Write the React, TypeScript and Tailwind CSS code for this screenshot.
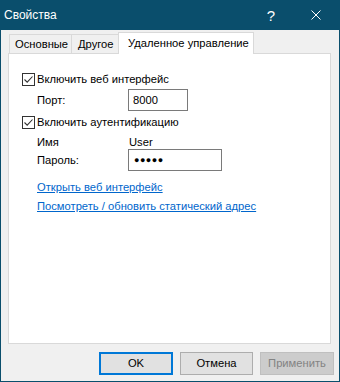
import React from "react";

function CheckBox() {
  return (
    <div className="w-[13px] h-[13px] border border-[#333333] bg-white flex items-center justify-center shrink-0">
      <svg width="11" height="11" viewBox="0 0 11 11">
        <path d="M1.5 5.5 L4.2 8.2 L9.5 2.5" fill="none" stroke="#333333" strokeWidth="1.1" />
      </svg>
    </div>
  );
}

export default function App() {
  return (
    <div className="w-[340px] h-[382px] bg-[#0a4e6c] flex flex-col font-['Liberation_Sans',sans-serif] text-[11.2px] text-black select-none whitespace-nowrap">
      {/* title bar */}
      <div className="h-[30px] flex items-center text-white shrink-0">
        <span className="ml-[4px] text-[12px] leading-[15px]">Свойства</span>
        <span className="ml-auto mr-[36px] text-[15px] leading-[15px]">?</span>
        <svg className="mr-[19px]" width="10" height="10" viewBox="0 0 10 10">
          <path d="M0.5 0.5 L9.5 9.5 M9.5 0.5 L0.5 9.5" stroke="white" strokeWidth="1" />
        </svg>
      </div>

      <div className="flex-1 mx-px mb-px bg-[#f0f0f0] flex flex-col pl-[7px] pr-[8px] pt-[2px]">
        {/* tabs */}
        <div className="flex items-start pl-[1px] h-[21px] relative z-10">
          <div className="mt-[2px] w-[63px] h-[19px] border border-b-0 border-[#d9d9d9] flex items-center pl-[5px] leading-[15px]">
            Основные
          </div>
          <div className="mt-[2px] w-[47px] h-[19px] border border-l-0 border-b-0 border-[#d9d9d9] flex items-center pl-[6px] leading-[15px]">
            Другое
          </div>
          <div className="-ml-[1px] w-[136px] h-[22px] bg-white border border-b-0 border-[#d9d9d9] flex items-center pl-[9px] pb-[1px] leading-[15px]">
            Удаленное управление
          </div>
        </div>

        {/* panel */}
        <div className="h-[291px] bg-white border border-[#d9d9d9] flex flex-col pt-[19px] pl-[13px]">
          <div className="h-[13px] flex items-center gap-[2px]">
            <CheckBox />
            <span className="leading-[15px]">Включить веб интерфейс</span>
          </div>
          <div className="mt-[3px] h-[22px] flex items-center pl-[15px]">
            <span className="w-[91px] leading-[15px]">Порт:</span>
            <div className="w-[60px] h-[22px] border border-[#7a7a7a] bg-white flex items-center pl-[4px] leading-[15px]">
              8000
            </div>
          </div>
          <div className="mt-[5px] h-[13px] flex items-center gap-[2px]">
            <CheckBox />
            <span className="leading-[15px]">Включить аутентификацию</span>
          </div>
          <div className="mt-[6px] h-[14px] flex items-center pl-[15px]">
            <span className="w-[92px] leading-[15px]">Имя</span>
            <span className="leading-[15px]">User</span>
          </div>
          <div className="h-[22px] flex items-center pl-[15px]">
            <span className="w-[91px] leading-[15px]">Пароль:</span>
            <div className="w-[94px] h-[22px] border border-[#7a7a7a] bg-white flex items-center pl-[5px] text-[9px] leading-[10px] tracking-[0.5px]">
              ●●●●●
            </div>
          </div>
          <div className="mt-[9px] h-[15px] flex items-center pl-[15px]">
            <span className="text-[#0066cc] underline leading-[15px]">Открыть веб интерфейс</span>
          </div>
          <div className="mt-[4px] h-[15px] flex items-center pl-[15px]">
            <span className="text-[#0066cc] underline leading-[15px]">Посмотреть / обновить статический адрес</span>
          </div>
        </div>

        {/* buttons */}
        <div className="mt-[8px] flex justify-end gap-[7px] -mr-[3px]">
          <div className="w-[74px] h-[23px] bg-[#e1e1e1] border-2 border-[#0078d7] flex items-center justify-center leading-[15px]">
            OK
          </div>
          <div className="w-[73px] h-[23px] bg-[#e1e1e1] border border-[#adadad] flex items-center justify-center leading-[15px]">
            Отмена
          </div>
          <div className="w-[74px] h-[23px] bg-[#cccccc] border border-[#bfbfbf] flex items-center justify-center text-[#838383] leading-[15px]">
            Применить
          </div>
        </div>
      </div>
    </div>
  );
}
